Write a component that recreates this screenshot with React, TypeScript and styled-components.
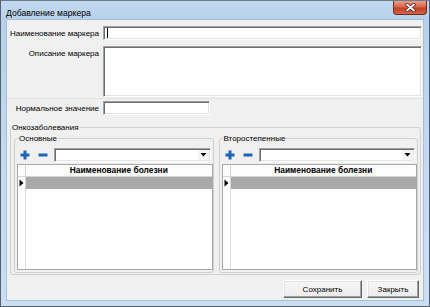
import React from 'react'
import styled, { createGlobalStyle } from 'styled-components'

const GlobalStyle = createGlobalStyle`
  html, body {
    margin: 0;
    padding: 0;
    background: #fff;
  }
  #root {
    width: 430px;
    height: 307px;
  }
`

const Window = styled.div`
  width: 430px;
  height: 307px;
  box-sizing: border-box;
  display: flex;
  flex-direction: column;
  border: 1px solid #56606e;
  border-top-color: #6f7a88;
  padding: 0 6px 6px 6px;
  background: linear-gradient(to bottom, #c3d9f1 0px, #b8d0eb 18px, #c6dbf2 60%, #c9ddf3 100%);
  font-family: "Liberation Sans", Arial, sans-serif;
`

const TitleBar = styled.div`
  height: 19px;
  display: flex;
  align-items: flex-start;
  justify-content: space-between;
`

const Title = styled.div`
  font-family: "Liberation Sans", Arial, sans-serif;
  font-size: 8.6px;
  color: #000;
  padding-top: 7px;
  margin-left: -1px;
`

const CloseButton = styled.div`
  width: 34px;
  height: 14px;
  box-sizing: border-box;
  margin-right: -4px;
  border: 1px solid #6a2a20;
  border-top: none;
  border-radius: 0 0 4px 4px;
  background: linear-gradient(to bottom, #e8a08c 0%, #d7664c 45%, #c43f25 55%, #d4654a 100%);
  display: flex;
  align-items: center;
  justify-content: center;
`

const Client = styled.div`
  flex: 1;
  display: flex;
  flex-direction: column;
  background: #f0f0f0;
  box-shadow: 0 0 0 1px #a9bdd5;
`

const FormRow = styled.div<{ $top?: number }>`
  display: grid;
  grid-template-columns: 92px 1fr;
  column-gap: 4px;
  margin-top: ${p => p.$top ?? 0}px;
  padding-right: 1px;
`

const Label = styled.div<{ $alignTop?: boolean }>`
  font-size: 8px;
  color: #000;
  text-align: right;
  white-space: nowrap;
  align-self: ${p => (p.$alignTop ? 'start' : 'center')};
  padding-top: ${p => (p.$alignTop ? 3 : 0)}px;
`

const Field = styled.div<{ $width?: number; $height?: number }>`
  box-sizing: border-box;
  width: ${p => (p.$width ? `${p.$width}px` : 'auto')};
  height: ${p => p.$height ?? 14}px;
  background: #fff;
  border: 1px solid;
  border-color: #a0a0a0 #fff #fff #a0a0a0;
  box-shadow: inset 1px 1px 0 #6d6d6d, inset -1px -1px 0 #e3e3e3;
  display: flex;
  align-items: center;
  padding-left: 3px;
`

const Caret = styled.span`
  width: 1px;
  height: 10px;
  background: #000;
`

const Divider = styled.div`
  margin-top: 1px;
  border-top: 1px solid #e2e2e2;
`

const OuterGroup = styled.fieldset`
  margin: 7px 2px 0 3px;
  padding: 0 2px 1px 3px;
  border: 1px solid #d0d0d0;
  border-radius: 3px;
  display: grid;
  grid-template-columns: 1fr 1fr;
  column-gap: 5px;
  min-width: 0;
`

const Legend = styled.legend<{ $shift?: number }>`
  font-size: 8px;
  line-height: 11px;
  color: #000;
  padding: 0 1px;
  margin-left: ${p => p.$shift ?? 0}px;
`

const InnerGroup = styled.fieldset`
  margin: 0;
  padding: 0 0 2px 2px;
  border: 1px solid #d0d0d0;
  border-radius: 3px;
  display: flex;
  flex-direction: column;
  height: 140px;
  box-sizing: border-box;
  min-width: 0;
`

const Toolbar = styled.div`
  display: flex;
  align-items: center;
  gap: 4px;
  height: 15px;
  margin-top: 3px;
  padding-left: 1px;
  padding-right: 2px;
`

const IconButton = styled.div`
  width: 14px;
  height: 14px;
  display: flex;
  align-items: center;
  justify-content: center;
`

const Combo = styled(Field)`
  flex: 1;
  padding-left: 0;
  justify-content: flex-end;
`

const ComboArrow = styled.div`
  width: 11px;
  height: 10px;
  margin-right: 1px;
  display: flex;
  align-items: center;
  justify-content: center;
  background: #f4f4f4;
`

const Grid = styled.div`
  flex: 1;
  margin-top: 2px;
  display: grid;
  grid-template-columns: 8px 1fr;
  grid-template-rows: 12px 12px 1fr;
  background: #fff;
  border: 1px solid #a8a8a8;
`

const HeaderCorner = styled.div`
  background: #fcfcfc;
  border-right: 1px solid #d5d5d5;
  border-bottom: 1px solid #d5d5d5;
`

const HeaderCell = styled.div`
  background: #fcfcfc;
  border-bottom: 1px solid #d5d5d5;
  font-size: 8.4px;
  font-weight: bold;
  color: #000;
  text-align: center;
  line-height: 11px;
  white-space: nowrap;
  overflow: hidden;
`

const RowMarker = styled.div`
  background: #fff;
  border-right: 1px solid #d5d5d5;
  display: flex;
  align-items: center;
  justify-content: center;
`

const SelectedCell = styled.div`
  background: #a9a9a9;
`

const EmptyMarker = styled.div`
  border-right: 1px solid #dcdcdc;
`

const ButtonRow = styled.div`
  display: flex;
  justify-content: flex-end;
  gap: 5px;
  margin-top: 5px;
  padding-right: 4px;
`

const Button = styled.div<{ $width: number }>`
  width: ${p => p.$width}px;
  height: 18px;
  box-sizing: border-box;
  background: linear-gradient(to bottom, #f7f7f7, #ececec);
  border: 1px solid;
  border-color: #fff #696969 #696969 #fff;
  box-shadow: inset -1px -1px 0 #a0a0a0, inset 1px 1px 0 #e3e3e3;
  font-size: 8px;
  color: #000;
  display: flex;
  align-items: center;
  justify-content: center;
`

const CloseIcon = () => (
  <svg width="11" height="9" viewBox="0 0 11 9">
    <path d="M2 1.5 L9 7.5 M9 1.5 L2 7.5" stroke="#5a1a10" strokeWidth="3.4" strokeLinecap="round" />
    <path d="M2 1.5 L9 7.5 M9 1.5 L2 7.5" stroke="#fff" strokeWidth="1.8" strokeLinecap="round" />
  </svg>
)

const PlusIcon = () => (
  <svg width="10" height="10" viewBox="0 0 10 10">
    <rect x="3.5" y="0.5" width="3" height="9" fill="#1e64b4" />
    <rect x="0.5" y="3.5" width="9" height="3" fill="#1e64b4" />
  </svg>
)

const MinusIcon = () => (
  <svg width="10" height="10" viewBox="0 0 10 10">
    <rect x="0.5" y="3.5" width="9" height="3" fill="#1e64b4" />
  </svg>
)

const DownArrow = () => (
  <svg width="7" height="5" viewBox="0 0 7 5">
    <path d="M0.5 1 L6.5 1 L3.5 4.5 Z" fill="#000" />
  </svg>
)

const RowArrow = () => (
  <svg width="5" height="8" viewBox="0 0 5 8">
    <path d="M0.5 0.5 L4.5 4 L0.5 7.5 Z" fill="#000" />
  </svg>
)

const DiseaseGroup = ({ title }: { title: string }) => (
  <InnerGroup>
    <Legend $shift={1}>{title}</Legend>
    <Toolbar>
      <IconButton><PlusIcon /></IconButton>
      <IconButton><MinusIcon /></IconButton>
      <Combo>
        <ComboArrow><DownArrow /></ComboArrow>
      </Combo>
    </Toolbar>
    <Grid>
      <HeaderCorner />
      <HeaderCell>Наименование болезни</HeaderCell>
      <RowMarker><RowArrow /></RowMarker>
      <SelectedCell />
      <EmptyMarker />
      <div />
    </Grid>
  </InnerGroup>
)

export default function App() {
  return (
    <>
      <GlobalStyle />
      <Window>
        <TitleBar>
          <Title>Добавление маркера</Title>
          <CloseButton><CloseIcon /></CloseButton>
        </TitleBar>
        <Client>
          <FormRow $top={6}>
            <Label>Наименование маркера</Label>
            <Field><Caret /></Field>
          </FormRow>
          <FormRow $top={6}>
            <Label $alignTop>Описание маркера</Label>
            <Field $height={51} />
          </FormRow>
          <Divider />
          <FormRow $top={2}>
            <Label>Нормальное значение</Label>
            <Field $width={107} />
          </FormRow>
          <OuterGroup>
            <Legend $shift={-3}>Онкозаболевания</Legend>
            <DiseaseGroup title="Основные" />
            <DiseaseGroup title="Второстепенные" />
          </OuterGroup>
          <ButtonRow>
            <Button $width={79}>Сохранить</Button>
            <Button $width={52}>Закрыть</Button>
          </ButtonRow>
        </Client>
      </Window>
    </>
  )
}
